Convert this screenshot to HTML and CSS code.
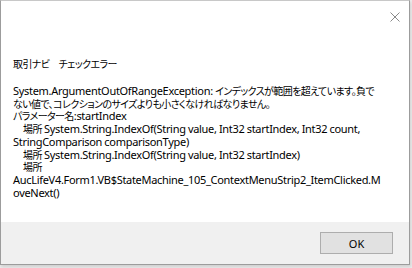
FILE: index.html
```html
<!DOCTYPE html>
<html lang="ja">
  <head>
    <meta charset="UTF-8" />
    <title>取引ナビ</title>
    <link rel="stylesheet" href="styles.css">
  </head>
  <body>
    <div class="dialog">
      <div class="titlebar">
        <button class="close" aria-label="閉じる">
          <svg width="10" height="10" viewBox="0 0 10 10">
            <path d="M0.5 0.5 L9.5 9.5 M9.5 0.5 L0.5 9.5" stroke="#8a8a8a" stroke-width="1" fill="none" />
          </svg>
        </button>
      </div>
      <div class="content">
        <p class="caption"><span class="ja">取引ナビ　チェックエラー</span></p>
        <p class="message">
          System.ArgumentOutOfRangeException: <span class="ja">インデックスが範囲を超えています。負で</span><br>
          <span class="ja">ない値で、コレクションのサイズよりも小さくなければなりません。</span><br>
          <span class="ja">パラメーター名</span>:startIndex<br>
          <span class="indent"><span class="ja">場所</span> System.String.IndexOf(String value, Int32 startIndex, Int32 count,</span><br>
          StringComparison comparisonType)<br>
          <span class="indent"><span class="ja">場所</span> System.String.IndexOf(String value, Int32 startIndex)</span><br>
          <span class="indent"><span class="ja">場所</span></span><br>
          AucLifeV4.Form1.VB$StateMachine_105_ContextMenuStrip2_ItemClicked.M<br>
          oveNext()
        </p>
      </div>
      <div class="footer">
        <button class="ok">OK</button>
      </div>
    </div>
  </body>
</html>
```

FILE: styles.css
```css
body {
  margin: 0;
  width: 412px;
  height: 268px;
  background: #ececec;
  font-family: "Noto Sans", "Noto Sans CJK JP", sans-serif;
  font-size: 11px;
  color: #000;
  overflow: hidden;
}
.ja {
  font-family: "Noto Sans CJK JP", sans-serif;
  font-feature-settings: "palt";
  font-size: 10px;
  letter-spacing: -0.6px;
}
.dialog {
  width: 408px;
  height: 263px;
  border: 1px solid #9c9c9c;
  border-top-color: #c8c8c8;
  background: #fff;
  display: flex;
  flex-direction: column;
  box-shadow: 1px 2px 3px rgba(0, 0, 0, 0.12);
}
.titlebar {
  height: 30px;
  display: flex;
  justify-content: flex-end;
  align-items: flex-start;
  padding-right: 9px;
}
.close {
  margin-top: 11px;
  width: 10px;
  height: 10px;
  padding: 0;
  border: none;
  background: none;
  display: block;
}
.close svg {
  display: block;
}
.content {
  flex: 1;
  padding-left: 12px;
}
.caption {
  margin: 26px 0 0;
  line-height: 13px;
}
.message {
  margin: 15px 0 0;
  line-height: 12.7px;
  letter-spacing: -0.3px;
  word-spacing: -0.3px;
  white-space: nowrap;
}
.indent {
  padding-left: 10px;
}
.footer {
  height: 42px;
  background: #f0f0f0;
  display: flex;
  justify-content: flex-end;
  align-items: flex-start;
  padding-right: 16px;
}
.ok {
  margin-top: 10px;
  width: 73px;
  height: 22px;
  padding: 0;
  border: 1px solid #adadad;
  background: #e1e1e1;
  font-family: inherit;
  font-size: 11px;
  color: #000;
}
```
